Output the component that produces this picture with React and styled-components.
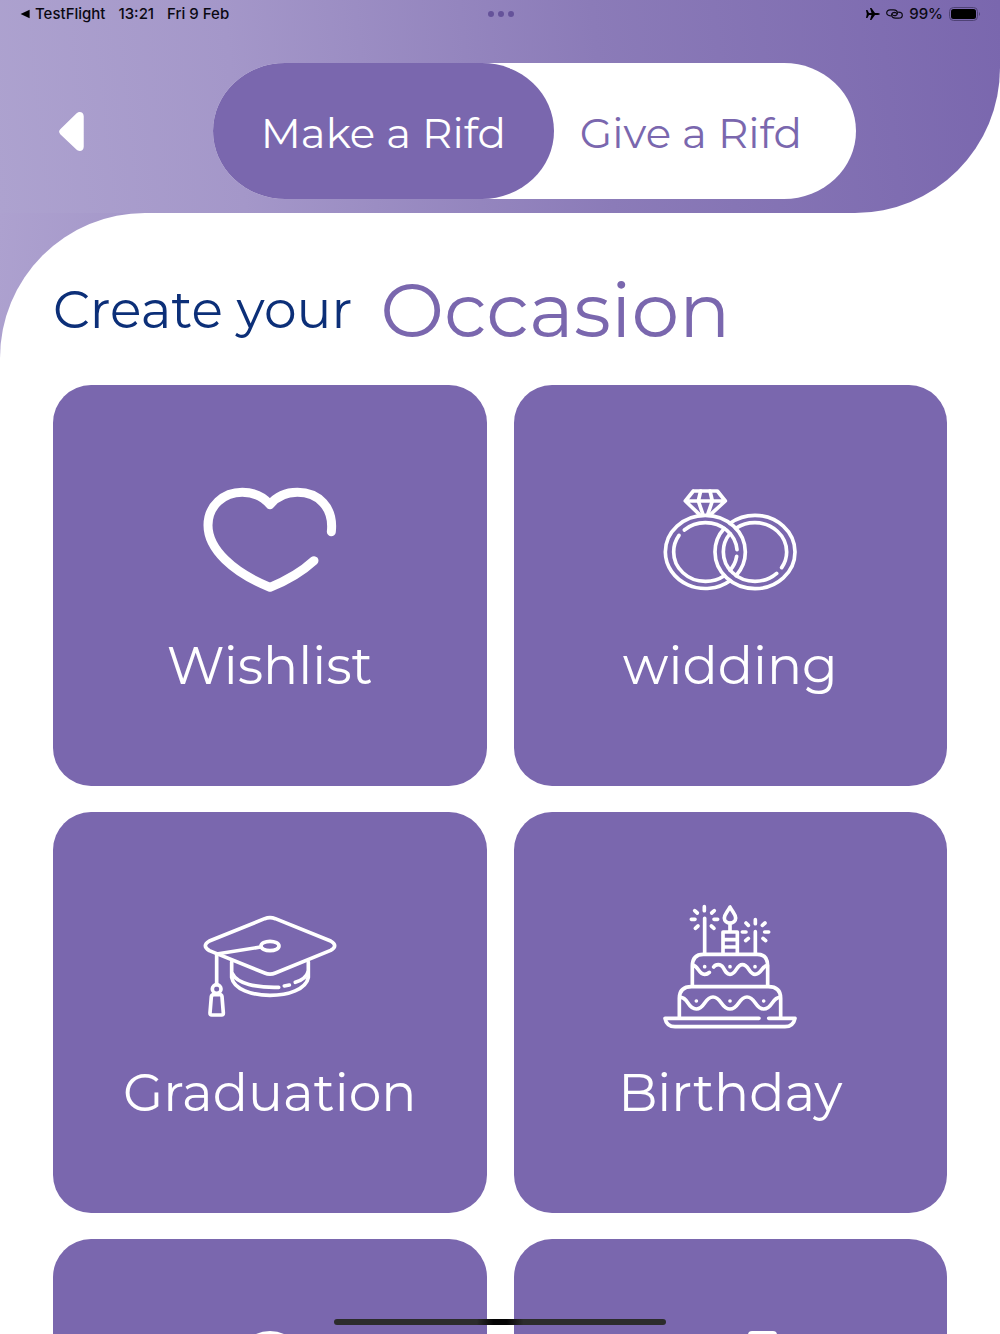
import React, {useState} from 'react';
import styled, {createGlobalStyle} from 'styled-components';

const PURPLE = '#7a67ae';
const NAVY = '#0c2f78';

const GlobalStyle = createGlobalStyle`
    * {
        box-sizing: border-box;
    }

    body {
        margin: 0;
        background: white;
        font-family: Montserrat, Inter, sans-serif;
    }

    button {
        border: none;
        padding: 0;
        background: none;
        font: inherit;
        cursor: pointer;
    }
`;

const Screen = styled.div`
    height: 100vh;
    overflow-y: auto;
    scrollbar-width: none;
`;

const Header = styled.header`
    background: linear-gradient(84deg, #ada2cf 0%, #a497c9 24%, #8b7bb8 60%, ${PURPLE} 100%);
    border-radius: 0 0 145px 0;
`;

const StatusBar = styled.div`
    display: grid;
    grid-template-columns: 1fr auto 1fr;
    align-items: center;
    height: 27px;
    padding: 0 19px 0 20px;
    font-family: Inter, sans-serif;
    font-size: 15px;
    font-weight: 500;
    color: #0b0912;
`;

const StatusGroup = styled.div`
    display: flex;
    align-items: center;
    justify-content: ${({$end}) => ($end ? 'flex-end' : 'flex-start')};
    gap: ${({$end}) => ($end ? '6px' : '13px')};
`;

const BackToApp = styled.span`
    display: flex;
    align-items: center;
    gap: 5px;
`;

const Nav = styled.nav`
    display: grid;
    grid-template-columns: 160px 1fr;
    align-items: center;
    padding: 36px 144px 14px 53px;
`;

const BackButton = styled.button`
    display: flex;
    justify-self: start;
    padding: 6px;
`;

const Toggle = styled.div`
    display: grid;
    grid-template-columns: 53fr 47fr;
    background: white;
    border-radius: 72px / 68px;
`;

const ToggleButton = styled.button`
    height: 136px;
    padding: 3px ${({$last}) => ($last ? '28px' : '0')} 0 0;
    border-radius: 72px / 68px;
    background: ${({$active}) => ($active ? PURPLE : 'transparent')};
    color: ${({$active}) => ($active ? 'white' : PURPLE)};
    font-size: 42px;
    white-space: nowrap;
`;

const SheetBackdrop = styled.div`
    background: linear-gradient(96deg, #ada1cf 0, #a497c9 145px, white 180px);
`;

const Sheet = styled.main`
    padding: 58px 53px 26px;
    background: white;
    border-radius: 145px 0 0 0;
`;

const Title = styled.h1`
    display: flex;
    align-items: center;
    gap: 28px;
    height: 76px;
    margin: 0 0 38px;
    font-size: 52px;
    font-weight: 400;
    color: ${NAVY};
    white-space: nowrap;
`;

const TitleAccent = styled.span`
    font-size: 76px;
    color: ${PURPLE};
`;

const Grid = styled.div`
    display: grid;
    grid-template-columns: 1fr 1fr;
    gap: 26px 27px;
`;

const Card = styled.button`
    display: flex;
    flex-direction: column;
    align-items: center;
    gap: 27px;
    padding: 88px 16px;
    border-radius: 38px;
    background: ${PURPLE};
    color: white;
`;

const CardIcon = styled.svg`
    width: 134px;
    height: 134px;
    fill: none;
    stroke: white;
    stroke-width: 11;
    stroke-linecap: round;
    stroke-linejoin: round;
`;

const CardLabel = styled.span`
    min-height: 64px;
    font-size: 52px;
    line-height: 64px;
`;

const HomeIndicator = styled.div`
    position: fixed;
    left: 33.4%;
    right: 33.4%;
    bottom: 9px;
    height: 6px;
    border-radius: 3px;
    background: linear-gradient(90deg, #2c2c2c 43%, #050505 48%, #050505 52%, #2c2c2c 57%);
`;

const HeartIcon = () => (
    <CardIcon viewBox="39 9 402 402" aria-hidden="true">
        <path
            style={{strokeWidth: 27}}
            d="M424 185C432 112 385 67 322 67C288 67 258 82 240 104C220 80 190 67 157 67C100 67 54 108 54 166C54 238 130 308 240 352C290 332 335 306 372 272"
        />
    </CardIcon>
);

const RingsIcon = () => (
    <CardIcon viewBox="39 9 402 402" aria-hidden="true">
        <path d="M130 63H202L226 93L182 133M148 133L106 93L130 63M106 93H226"/>
        <path d="M152 63L145 93L158 131M180 63L187 93L174 131"/>
        <path d="M240 332A120 110 0 0 1 46 246A120 110 0 0 1 166 136A120 110 0 0 1 286 246A120 110 0 0 1 258 317"/>
        <path d="M223 175A120 110 0 0 0 195 246A120 110 0 0 0 315 356A120 110 0 0 0 435 246A120 110 0 0 0 315 136A120 110 0 0 0 240 160"/>
        <path d="M103 180A95 88 0 0 1 166 158A95 88 0 0 1 261 239M260 259A95 88 0 0 1 240 301M223 317A95 88 0 0 1 166 334A95 88 0 0 1 71 246A95 88 0 0 1 87 196"/>
        <path d="M240 191A95 88 0 0 0 220 246A95 88 0 0 0 315 334A95 88 0 0 0 380 310M395 293A95 88 0 0 0 410 246A95 88 0 0 0 315 158A95 88 0 0 0 258 175"/>
    </CardIcon>
);

const CapIcon = () => (
    <CardIcon viewBox="39 0 402 402" aria-hidden="true">
        <path d="M224 56Q240 50 256 56L422 123Q446 137 422 151L256 219Q240 226 224 219L58 152Q34 137 58 123Z"/>
        <ellipse cx="240" cy="138" rx="27" ry="14"/>
        <path d="M212 141L80 162V254"/>
        <circle cx="80" cy="267" r="13"/>
        <path d="M71 284H90Q95 284 96 290L100 339Q100 345 95 345H65Q60 345 60 339L64 290Q65 284 71 284Z"/>
        <path d="M125 186V232C138 304 342 304 355 232V186"/>
        <path d="M128 222C140 250 200 264 266 262M283 258L298 255M316 247Q348 237 354 216"/>
    </CardIcon>
);

const CakeIcon = () => (
    <CardIcon viewBox="39 30 402 402" aria-hidden="true">
        <path d="M327 385H45Q50 410 75 410H405Q430 410 435 385H356"/>
        <path d="M88 380V325Q88 290 125 290H355Q392 290 392 325V380"/>
        <path d="M127 286V228Q127 193 160 193H322Q353 193 353 228V286"/>
        <path d="M92 322C115 322 112 357 139 357C165 357 163 321 189 321C215 321 213 357 240 357C267 357 265 321 291 321C317 321 315 357 341 357C368 357 365 322 390 322"/>
        <path d="M130 226C145 228 145 252 164 253Q172 253 178 247M191 231C197 222 212 221 219 232C226 245 230 253 240 253C260 253 258 224 277 224C297 224 297 253 315 253C335 253 335 228 352 226"/>
        <path d="M219 190V126H262V190M219 149H262M219 171H262M240 100V124"/>
        <path d="M240 51C231 68 223 74 223 84A17 15 0 0 0 257 84C257 74 249 68 240 51Z"/>
        <path d="M164 85V190M163 50V62M124 88H135M192 88H203M134 62L142 69M193 62L185 69M136 115L144 108M192 115L184 108"/>
        <path d="M316 125V190M316 89V101M277 126H288M344 126H356M288 99L295 106M345 99L337 106M287 152L295 145M347 152L339 145"/>
        <path d="M164 230h.1M240 230h.1M315 230h.1M139 333h.1M240 333h.1M341 333h.1"/>
    </CardIcon>
);

const BabyIcon = () => (
    <CardIcon viewBox="0 0 134 134" aria-hidden="true">
        <circle cx="67" cy="37" r="29" style={{strokeWidth: 8}}/>
    </CardIcon>
);

const GiftIcon = () => (
    <CardIcon viewBox="0 0 134 134" aria-hidden="true">
        <path d="M89 8V60H110V8Z" style={{strokeWidth: 8}}/>
    </CardIcon>
);

const occasions = [
    {id: 'wishlist', label: 'Wishlist', Icon: HeartIcon},
    {id: 'wedding', label: 'widding', Icon: RingsIcon},
    {id: 'graduation', label: 'Graduation', Icon: CapIcon},
    {id: 'birthday', label: 'Birthday', Icon: CakeIcon},
    {id: 'baby', Icon: BabyIcon},
    {id: 'gift', Icon: GiftIcon},
];

const StatusIcons = () => (
    <StatusGroup $end>
        <svg width="14" height="12" viewBox="0 0 14 12" aria-hidden="true">
            <path d="M0 2H1.4L3 5L5.5 5.1L4 0H5.4L9 5.1H12Q14 5.4 14 6Q14 6.6 12 6.9H9L5.4 12H4L5.5 6.9L3 7L1.4 10H0L.8 6Z"/>
        </svg>
        <svg width="17" height="10" viewBox="0 0 17 10" fill="none" stroke="#0b0912" strokeWidth="1.2" strokeLinecap="round" aria-hidden="true">
            <path d="M4.5 6.8C2 6.8 .7 5.4 .7 3.8S2 .8 4.2 .8H7.5C10 .8 11.4 2.2 11.4 3.9S10 6.7 8.3 6.7Q6.8 6.6 6.4 5.6"/>
            <path d="M12.5 3.2C15 3.2 16.3 4.6 16.3 6.2S15 9.2 12.8 9.2H9.5C7 9.2 5.6 7.8 5.6 6.1S7 3.3 8.7 3.3Q10.2 3.4 10.6 4.4"/>
        </svg>
        <span>99%</span>
        <svg width="32" height="14" viewBox="0 0 32 14" aria-hidden="true">
            <rect x=".5" y=".5" width="28" height="13" rx="4" fill="none" stroke="#4f4275"/>
            <rect x="2" y="2" width="25" height="10" rx="2.5"/>
            <path d="M30 5Q32 7 30 9Z" fill="#4f4275"/>
        </svg>
    </StatusGroup>
);

const App = () => {
    const [mode, setMode] = useState('make');

    return (
        <Screen>
            <GlobalStyle/>
            <Header>
                <StatusBar>
                    <StatusGroup>
                        <BackToApp>
                            <svg width="10" height="10" viewBox="0 0 10 10" aria-hidden="true">
                                <path d="M.6 5L9.6 .8V9.2Z"/>
                            </svg>
                            TestFlight
                        </BackToApp>
                        <span>13:21</span>
                        <span>Fri 9 Feb</span>
                    </StatusGroup>
                    <svg width="26" height="6" viewBox="0 0 26 6" fill="#65529a" aria-hidden="true">
                        <circle cx="3" cy="3" r="3"/>
                        <circle cx="13" cy="3" r="3"/>
                        <circle cx="23" cy="3" r="3"/>
                    </svg>
                    <StatusIcons/>
                </StatusBar>
                <Nav>
                    <BackButton aria-label="Back">
                        <svg width="25" height="39" viewBox="178 215 74 118" fill="white" aria-hidden="true">
                            <path d="M181 267L229 220C238 211 252 215 252 228V320C252 333 238 337 229 328L181 282Q174 274 181 267Z"/>
                        </svg>
                    </BackButton>
                    <Toggle>
                        <ToggleButton $active={mode === 'make'} onClick={() => setMode('make')}>
                            Make a Rifd
                        </ToggleButton>
                        <ToggleButton $last $active={mode === 'give'} onClick={() => setMode('give')}>
                            Give a Rifd
                        </ToggleButton>
                    </Toggle>
                </Nav>
            </Header>
            <SheetBackdrop>
                <Sheet>
                    <Title>
                        Create your <TitleAccent>Occasion</TitleAccent>
                    </Title>
                    <Grid>
                        {occasions.map(({id, label, Icon}) => (
                            <Card key={id} aria-label={label || id}>
                                <Icon/>
                                <CardLabel>{label}</CardLabel>
                            </Card>
                        ))}
                    </Grid>
                </Sheet>
            </SheetBackdrop>
            <HomeIndicator/>
        </Screen>
    );
};

export default App;
